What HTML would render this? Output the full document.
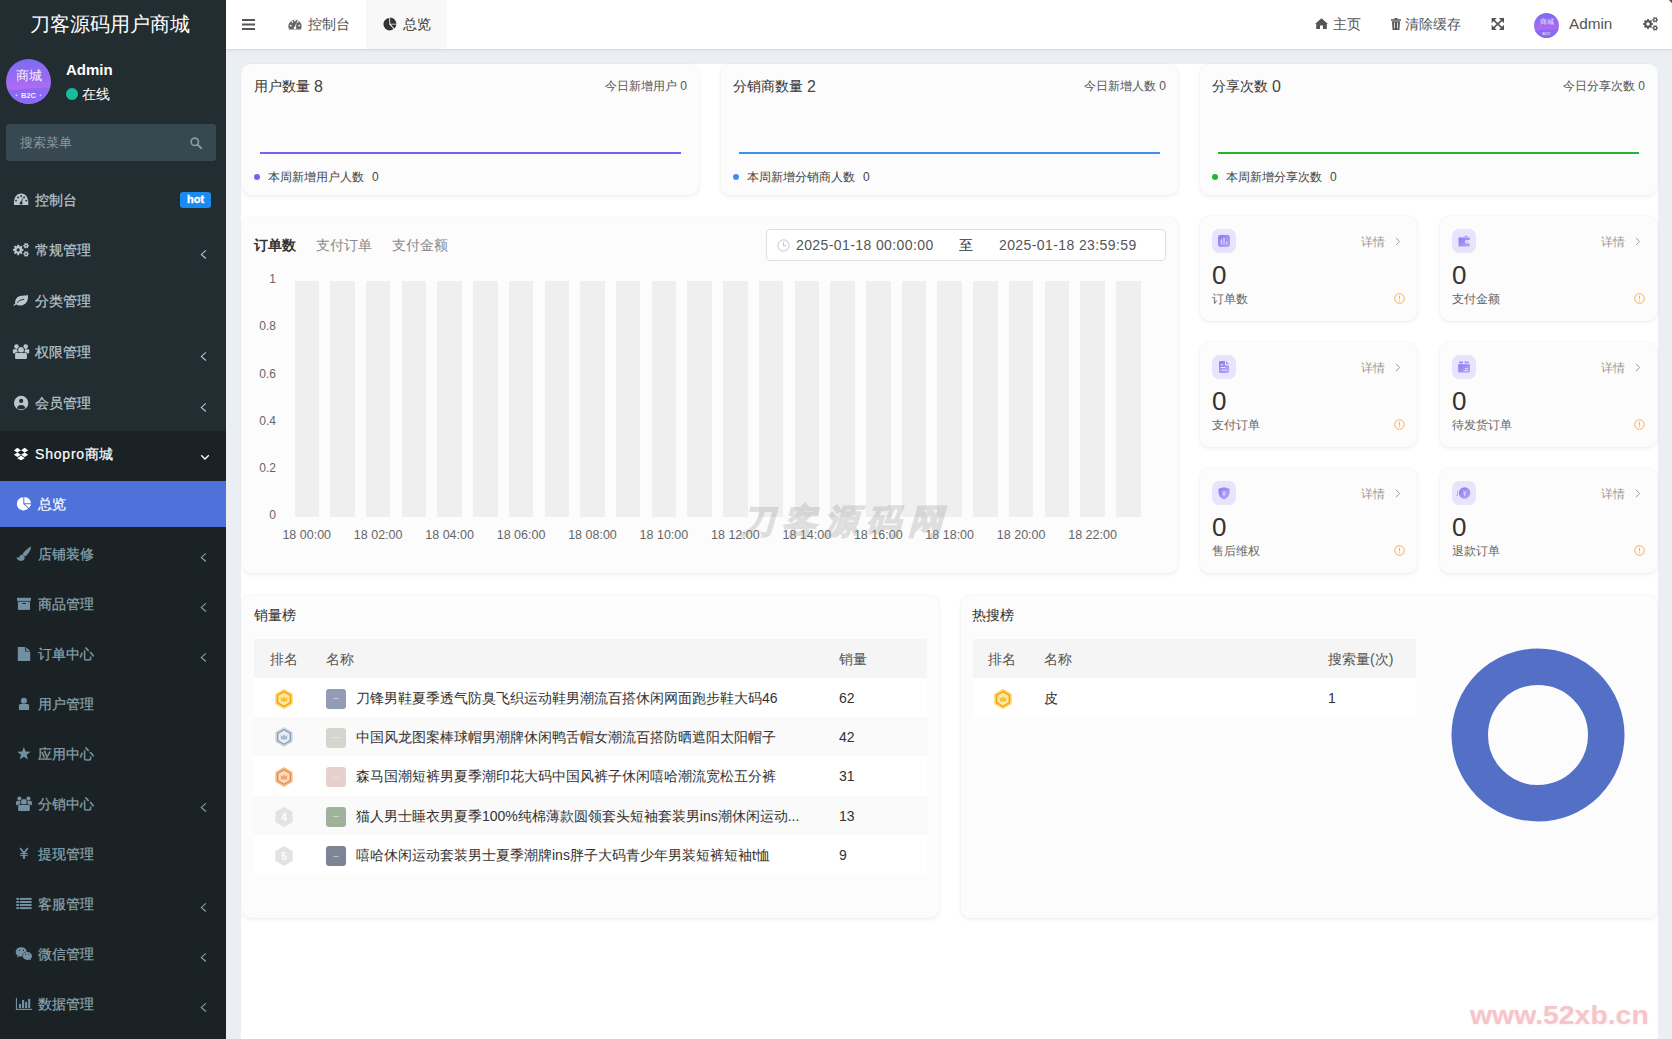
<!DOCTYPE html>
<html><head><meta charset="utf-8">
<style>
*{box-sizing:border-box;margin:0;padding:0}
html,body{width:1672px;height:1039px;overflow:hidden}
body{position:relative;background:#ebeef3;font-family:"Liberation Sans",sans-serif;color:#333;font-size:14px}
.abs{position:absolute}
svg{display:block}
/* sidebar */
#side{position:absolute;left:0;top:0;width:226px;height:1039px;background:#222d32;overflow:hidden}
#side .logo{position:absolute;left:-3px;top:0;width:226px;height:49px;text-align:center;color:#fff;font-size:20px;line-height:49px}
#side .av{position:absolute;left:6px;top:59px;width:45px;height:45px;border-radius:50%;background:linear-gradient(180deg,#8a63f0 0%,#a070f2 60%,#9a6cf4 100%);overflow:hidden}
#side .uname{position:absolute;left:66px;top:61px;font-weight:bold;font-size:15px;color:#fff;line-height:18px}
#side .online{position:absolute;left:66px;top:85px;font-size:14px;color:#fff;line-height:18px;padding-left:16px}
#side .online:before{content:"";position:absolute;left:0;top:3px;width:12px;height:12px;border-radius:50%;background:#18bc9c}
#side .search{position:absolute;left:6px;top:124px;width:210px;height:37px;border-radius:3px;background:#374850}
#side .search span{position:absolute;left:14px;top:0;line-height:37px;font-size:13px;color:#8a9aa3}
.mi{position:absolute;left:0;width:226px;height:50px;color:#b8c7ce;font-size:14px}
.mi .ic{position:absolute;left:14px;top:18px;width:14px;height:14px}
.mi .tx{position:absolute;left:35px;top:0;line-height:50px}
.mi .ch{position:absolute;left:200px;top:23px;width:7px;height:10px}
.sub{color:#8aa4af}
.sub .ic{left:17px}
.sub .tx{left:38px}
.hot{position:absolute;left:180px;top:192px;width:31px;height:16px;border-radius:3px;background:#1a8af2;color:#fff;font-size:11px;font-weight:bold;line-height:14.5px;text-align:center;-webkit-text-stroke:0.35px #fff}
#sidebot{position:absolute;left:0;top:431px;width:226px;height:608px;background:#1a2226}
/* header */
#hdr{position:absolute;left:226px;top:0;width:1446px;height:50px;background:#fff;border-bottom:1px solid #d9dde2;box-shadow:0 1px 3px rgba(0,0,0,.05)}
#panel{position:absolute;left:241px;top:64px;width:1417px;height:975px;background:#fff;border-radius:9px 9px 0 0}
.card{position:absolute;background:#fcfcfc;border-radius:9px;box-shadow:0 0 2px rgba(0,0,0,.07),0 2px 5px rgba(0,0,0,.05)}
.tt{font-size:14px;color:#333;line-height:20px}
.rt{font-size:12px;color:#555;line-height:18px}
.lg{font-size:12px;color:#444;line-height:18px}
.dt{line-height:30px;font-size:14px;color:#555;letter-spacing:0.4px}
.yl{font-size:12px;color:#666;line-height:16px;text-align:right}
.xl{font-size:12.5px;color:#666;line-height:16px;text-align:center}
.th{font-size:14px;color:#555;line-height:38px}
.td{font-size:14px;color:#333;line-height:20px;white-space:nowrap}
.tx1{position:absolute;left:35px;font-size:14px;line-height:20px;color:#b8c7ce;white-space:nowrap;-webkit-text-stroke:0.2px currentColor}
.tx2{position:absolute;left:38px;font-size:14px;line-height:20px;color:#8aa4af;white-space:nowrap;-webkit-text-stroke:0.2px currentColor}
</style></head>
<body>
<div id="side">
  <div class="logo">刀客源码用户商城</div>
  <svg class="abs" style="left:6px;top:59px" width="45" height="45" viewBox="0 0 45 45"><defs><linearGradient id="ag" x1="0" y1="0" x2="0" y2="1"><stop offset="0" stop-color="#7c6bf3"/><stop offset="0.45" stop-color="#9a6cf2"/><stop offset="0.66" stop-color="#b46bef"/><stop offset="1" stop-color="#b46bef"/></linearGradient><clipPath id="ac"><circle cx="22.5" cy="22.5" r="22.5"/></clipPath></defs><g clip-path="url(#ac)"><rect width="45" height="45" fill="url(#ag)"/><path d="M0 30 C12 32 28 28 45 29 V45 H0 Z" fill="#8a6af3"/></g><text x="22.5" y="20.5" text-anchor="middle" font-size="13" fill="#fff" fill-opacity="0.92">商城</text><text x="22.5" y="39" text-anchor="middle" font-family="Liberation Sans" font-size="7.5" font-weight="bold" fill="#fff" fill-opacity="0.9">B2C</text><circle cx="10.5" cy="36.3" r="0.9" fill="#fff" fill-opacity="0.7"/><circle cx="34.5" cy="36.3" r="0.9" fill="#fff" fill-opacity="0.7"/></svg>
  <div class="uname">Admin</div>
  <div class="online">在线</div>
  <div class="search"><span>搜索菜单</span><svg class="abs" style="left:184px;top:13px" width="12" height="12" viewBox="0 0 12 12"><circle cx="4.8" cy="4.8" r="3.7" fill="none" stroke="#8a9aa3" stroke-width="1.7"/><path d="M7.6 7.6 L11 11" stroke="#8a9aa3" stroke-width="2" stroke-linecap="round"/></svg></div>
  <div id="sidebot"></div>
<!--MENU-->
<div class="tx1" style="top:189.6px">控制台</div>
<span class="hot">hot</span>
<div class="tx1" style="top:240.4px">常规管理</div>
<svg class="abs" style="left:199px;top:249.0px" width="8" height="11" viewBox="0 0 8 11"><path d="M6.9 1.3 L2.3 5.4 L6.9 9.5" stroke="#b8c7ce" stroke-width="1.1" fill="none"/></svg>
<div class="tx1" style="top:291.2px">分类管理</div>
<div class="tx1" style="top:342.0px">权限管理</div>
<svg class="abs" style="left:199px;top:351.0px" width="8" height="11" viewBox="0 0 8 11"><path d="M6.9 1.3 L2.3 5.4 L6.9 9.5" stroke="#b8c7ce" stroke-width="1.1" fill="none"/></svg>
<div class="tx1" style="top:392.8px">会员管理</div>
<svg class="abs" style="left:199px;top:402.0px" width="8" height="11" viewBox="0 0 8 11"><path d="M6.9 1.3 L2.3 5.4 L6.9 9.5" stroke="#b8c7ce" stroke-width="1.1" fill="none"/></svg>
<div class="tx1" style="top:444px;color:#fff"><span style="letter-spacing:0.8px">Shopro</span>商城</div>
<svg class="abs" style="left:200px;top:454px" width="10" height="7" viewBox="0 0 10 7"><path d="M1.2 1.3 L5 5.1 L8.8 1.3" stroke="#fff" stroke-width="1.35" fill="none"/></svg>
<div class="abs" style="left:0;top:481px;width:226px;height:46px;background:#4e71da"></div>
<div class="tx2" style="top:494px;color:#fff">总览</div>
<div class="tx2" style="top:544px">店铺装修</div>
<svg class="abs" style="left:199px;top:552.0px" width="8" height="11" viewBox="0 0 8 11"><path d="M6.9 1.3 L2.3 5.4 L6.9 9.5" stroke="#8aa4af" stroke-width="1.1" fill="none"/></svg>
<div class="tx2" style="top:594px">商品管理</div>
<svg class="abs" style="left:199px;top:602.0px" width="8" height="11" viewBox="0 0 8 11"><path d="M6.9 1.3 L2.3 5.4 L6.9 9.5" stroke="#8aa4af" stroke-width="1.1" fill="none"/></svg>
<div class="tx2" style="top:644px">订单中心</div>
<svg class="abs" style="left:199px;top:652.0px" width="8" height="11" viewBox="0 0 8 11"><path d="M6.9 1.3 L2.3 5.4 L6.9 9.5" stroke="#8aa4af" stroke-width="1.1" fill="none"/></svg>
<div class="tx2" style="top:694px">用户管理</div>
<div class="tx2" style="top:744px">应用中心</div>
<div class="tx2" style="top:794px">分销中心</div>
<svg class="abs" style="left:199px;top:802.0px" width="8" height="11" viewBox="0 0 8 11"><path d="M6.9 1.3 L2.3 5.4 L6.9 9.5" stroke="#8aa4af" stroke-width="1.1" fill="none"/></svg>
<div class="tx2" style="top:844px">提现管理</div>
<div class="tx2" style="top:894px">客服管理</div>
<svg class="abs" style="left:199px;top:902.0px" width="8" height="11" viewBox="0 0 8 11"><path d="M6.9 1.3 L2.3 5.4 L6.9 9.5" stroke="#8aa4af" stroke-width="1.1" fill="none"/></svg>
<div class="tx2" style="top:944px">微信管理</div>
<svg class="abs" style="left:199px;top:952.0px" width="8" height="11" viewBox="0 0 8 11"><path d="M6.9 1.3 L2.3 5.4 L6.9 9.5" stroke="#8aa4af" stroke-width="1.1" fill="none"/></svg>
<div class="tx2" style="top:994px">数据管理</div>
<svg class="abs" style="left:199px;top:1002.0px" width="8" height="11" viewBox="0 0 8 11"><path d="M6.9 1.3 L2.3 5.4 L6.9 9.5" stroke="#8aa4af" stroke-width="1.1" fill="none"/></svg>
<svg class="abs" style="left:12px;top:192px;color:#b8c7ce" width="18" height="15" viewBox="12 192 18 15"><path d="M14 205 C13.3 198 16.5 193.6 21.1 193.6 C25.7 193.6 28.9 198 28.2 205 Z" fill="currentColor"/><circle cx="16" cy="200.6" r="0.95" fill="#222d32"/><circle cx="18.1" cy="197.4" r="0.95" fill="#222d32"/><circle cx="21.1" cy="195.9" r="0.95" fill="#222d32"/><circle cx="24.1" cy="197.4" r="0.95" fill="#222d32"/><circle cx="26.2" cy="200.6" r="0.95" fill="#222d32"/><path d="M20.3 203.2 L22.9 196.8 L21.9 203.6 Z" fill="#222d32"/><circle cx="21.1" cy="203.2" r="1.35" fill="#222d32"/></svg>
<svg class="abs" style="left:11px;top:241px;color:#b8c7ce" width="19" height="18" viewBox="11 241 19 18"><path fill-rule="evenodd" d="M22.07 248.87 L23.43 249.03 L23.43 250.77 L22.07 250.93 L21.66 251.91 L22.51 252.98 L21.28 254.21 L20.21 253.36 L19.23 253.77 L19.07 255.13 L17.33 255.13 L17.17 253.77 L16.19 253.36 L15.12 254.21 L13.89 252.98 L14.74 251.91 L14.33 250.93 L12.97 250.77 L12.97 249.03 L14.33 248.87 L14.74 247.89 L13.89 246.82 L15.12 245.59 L16.19 246.44 L17.17 246.03 L17.33 244.67 L19.07 244.67 L19.23 246.03 L20.21 246.44 L21.28 245.59 L22.51 246.82 L21.66 247.89 Z M19.80 249.90 A1.6 1.6 0 1 0 16.60 249.90 A1.6 1.6 0 1 0 19.80 249.90 Z" fill="currentColor"/><path fill-rule="evenodd" d="M28.08 244.99 L28.93 245.07 L28.93 246.33 L28.08 246.41 L27.70 247.06 L28.06 247.83 L26.97 248.47 L26.47 247.77 L25.73 247.77 L25.23 248.47 L24.14 247.83 L24.50 247.06 L24.12 246.41 L23.27 246.33 L23.27 245.07 L24.12 244.99 L24.50 244.34 L24.14 243.57 L25.23 242.93 L25.73 243.63 L26.47 243.63 L26.97 242.93 L28.06 243.57 L27.70 244.34 Z M26.90 245.70 A0.8 0.8 0 1 0 25.30 245.70 A0.8 0.8 0 1 0 26.90 245.70 Z" fill="currentColor"/><path fill-rule="evenodd" d="M28.08 253.19 L28.93 253.27 L28.93 254.53 L28.08 254.61 L27.70 255.26 L28.06 256.03 L26.97 256.67 L26.47 255.97 L25.73 255.97 L25.23 256.67 L24.14 256.03 L24.50 255.26 L24.12 254.61 L23.27 254.53 L23.27 253.27 L24.12 253.19 L24.50 252.54 L24.14 251.77 L25.23 251.13 L25.73 251.83 L26.47 251.83 L26.97 251.13 L28.06 251.77 L27.70 252.54 Z M26.90 253.90 A0.8 0.8 0 1 0 25.30 253.90 A0.8 0.8 0 1 0 26.90 253.90 Z" fill="currentColor"/></svg>
<svg class="abs" style="left:12px;top:293px;color:#b8c7ce" width="18" height="14" viewBox="12 293 18 14"><path d="M13.3 305.6 C13.6 305 14.3 304.2 15.2 303.6 C14.8 300 16.5 297 20 296 C23 295.2 26 296 27.8 294.7 C28.6 299 27 303.5 23 305 C20.5 306 18 305.6 16.2 304.6 C15.4 305.1 14.4 305.9 13.3 305.6 Z" fill="currentColor"/><path d="M17.2 302.6 C19 300.6 21 299.6 23.8 299.3" stroke="#222d32" stroke-width="0.95" fill="none" stroke-linecap="round"/></svg>
<svg class="abs" style="left:12px;top:343px;color:#b8c7ce" width="18" height="17" viewBox="12 343 18 17"><circle cx="16.5" cy="346.6" r="2.3" fill="currentColor"/><circle cx="25.7" cy="346.6" r="2.3" fill="currentColor"/><rect x="12.9" y="349.3" width="4.6" height="4.2" rx="1" fill="currentColor"/><rect x="24.6" y="349.3" width="4.6" height="4.2" rx="1" fill="currentColor"/><circle cx="21" cy="349.9" r="3.4" fill="#222d32"/><circle cx="21" cy="349.9" r="2.9" fill="currentColor"/><rect x="14.6" y="352.6" width="12.8" height="6.8" rx="1.4" fill="#222d32"/><rect x="15.1" y="353.1" width="11.8" height="5.9" rx="1.1" fill="currentColor"/></svg>
<svg class="abs" style="left:13px;top:395px;color:#b8c7ce" width="17" height="17" viewBox="13 395 17 17"><circle cx="21.15" cy="403" r="7.2" fill="currentColor"/><circle cx="21.15" cy="400.9" r="2.1" fill="#222d32"/><path d="M17.1 407.9 C17.6 405.5 19.2 404.9 21.15 404.9 C23.1 404.9 24.7 405.5 25.2 407.9 C24 408.9 22.6 409.2 21.15 409.2 C19.7 409.2 18.3 408.9 17.1 407.9 Z" fill="#222d32"/></svg>
<svg class="abs" style="left:13px;top:446px;color:#fff" width="17" height="16" viewBox="13 446 17 16"><path d="M17.3 447.8 L13.9 450.4 L17.4 452.6 L20.9 450.3 Z M24.7 447.8 L28.2 450.4 L24.6 452.6 L21.1 450.3 Z M13.9 454.7 L17.4 452.6 L20.9 454.8 L17.4 457.1 Z M28.2 454.7 L24.6 452.6 L21.1 454.8 L24.6 457.1 Z M17.5 457.9 L21 455.6 L24.5 457.9 L24.5 458.4 L21 460.3 L17.5 458.4 Z" fill="#fff"/></svg>
<svg class="abs" style="left:15px;top:495px;color:#fff" width="18" height="17" viewBox="15 495 18 17"><path d="M23.3 497.2 L23.3 503.9 L28.2 508.4 A6.6 6.6 0 1 1 23.3 497.2 Z" fill="#fff"/><path d="M24.3 496.9 A6.6 6.6 0 0 1 31 503.2 L24.3 503.2 Z" fill="#fff"/><path d="M24.8 504.2 L31 504.2 A6.6 6.6 0 0 1 28.9 508.1 Z" fill="#fff"/></svg>
<svg class="abs" style="left:15px;top:545px;color:#7390a0" width="18" height="18" viewBox="15 545 18 18"><path d="M30.9 546.9 C31.4 547.8 30 551.5 26.5 555.5 C25.6 556.4 24.4 556.3 23.5 555.5 C22.7 554.6 22.7 553.5 23.6 552.6 C27.2 549 30 546.4 30.9 546.9 Z" fill="currentColor"/><path d="M22.4 554.6 C24 555.4 25 556.8 24.6 558.6 C24 560.6 21.8 561.2 19.8 560.8 C18 560.4 16.9 559.2 16.5 557 C17.6 557.8 18.6 557.8 19.3 557 C20 556 20.6 554.5 22.4 554.6 Z" fill="currentColor"/></svg>
<svg class="abs" style="left:15px;top:596px;color:#7390a0" width="18" height="16" viewBox="15 596 18 16"><rect x="17" y="597.8" width="13.9" height="3.1" fill="currentColor"/><rect x="17.9" y="601.6" width="12.1" height="8.3" fill="currentColor"/><rect x="22.3" y="603" width="3.5" height="1.1" rx="0.55" fill="#1a2226"/></svg>
<svg class="abs" style="left:16px;top:645px;color:#7390a0" width="16" height="17" viewBox="16 645 16 17"><path d="M17.8 646.9 H25.2 V651.6 H30.2 V660.9 H17.8 Z" fill="currentColor"/><path d="M26.2 647.2 L30 651 H26.2 Z" fill="currentColor"/></svg>
<svg class="abs" style="left:17px;top:696px;color:#7390a0" width="14" height="15" viewBox="17 696 14 15"><circle cx="23.9" cy="700.7" r="3.05" fill="currentColor"/><path d="M18.9 709.9 V705.6 C18.9 704.6 19.7 703.9 20.7 703.9 H27.3 C28.3 703.9 29.1 704.6 29.1 705.6 V709.9 Z" fill="currentColor"/></svg>
<svg class="abs" style="left:15px;top:745px;color:#7390a0" width="18" height="17" viewBox="15 745 18 17"><polygon points="23.85,746.90 25.55,751.55 30.51,751.74 26.61,754.80 27.96,759.56 23.85,756.80 19.74,759.56 21.09,754.80 17.19,751.74 22.15,751.55" fill="currentColor"/></svg>
<svg class="abs" style="left:15px;top:795px;color:#7390a0" width="18" height="17" viewBox="15 795 18 17"><circle cx="19.4" cy="798.6" r="2.1" fill="currentColor"/><circle cx="28.4" cy="798.6" r="2.1" fill="currentColor"/><rect x="16" y="801" width="4.5" height="4.2" rx="1" fill="currentColor"/><rect x="27.4" y="801" width="4.5" height="4.2" rx="1" fill="currentColor"/><circle cx="23.9" cy="801.9" r="3.4" fill="#1a2226"/><circle cx="23.9" cy="801.9" r="2.9" fill="currentColor"/><rect x="17.6" y="804.5" width="12.7" height="6.9" rx="1.4" fill="#1a2226"/><rect x="18.1" y="805" width="11.7" height="6" rx="1.1" fill="currentColor"/></svg>
<svg class="abs" style="left:18px;top:846px;color:#7390a0" width="12" height="14" viewBox="18 846 12 14"><path d="M20.2 847.9 L24 853 L27.8 847.9" stroke="currentColor" stroke-width="1.7" fill="none"/><path d="M24 852.5 V859" stroke="currentColor" stroke-width="1.8"/><path d="M20.2 853.6 H27.8 M20.2 855.6 H27.8" stroke="currentColor" stroke-width="1"/></svg>
<svg class="abs" style="left:15px;top:896px;color:#7390a0" width="18" height="14" viewBox="15 896 18 14"><rect x="16.3" y="897.9" width="2.6" height="2" fill="currentColor"/><rect x="19.7" y="897.9" width="11.9" height="2" fill="currentColor"/><rect x="16.3" y="901" width="2.6" height="2" fill="currentColor"/><rect x="19.7" y="901" width="11.9" height="2" fill="currentColor"/><rect x="16.3" y="904" width="2.6" height="2" fill="currentColor"/><rect x="19.7" y="904" width="11.9" height="2" fill="currentColor"/><rect x="16.3" y="907.1" width="2.6" height="2" fill="currentColor"/><rect x="19.7" y="907.1" width="11.9" height="2" fill="currentColor"/></svg>
<svg class="abs" style="left:15px;top:946px;color:#7390a0" width="18" height="16" viewBox="15 946 18 16"><path d="M21.2 947.3 C24.4 947.3 26.8 949.3 26.8 951.9 C26.8 954.5 24.4 956.5 21.2 956.5 C20.5 956.5 19.9 956.4 19.3 956.2 L17 957.6 L17.6 955.4 C16.4 954.5 15.7 953.3 15.7 951.9 C15.7 949.3 18 947.3 21.2 947.3 Z" fill="currentColor"/><path d="M27.4 952 C30 952 32 953.8 32 956 C32 957.1 31.5 958.1 30.7 958.8 L31.1 960.6 L29.2 959.6 C28.6 959.8 28 959.9 27.4 959.9 C24.8 959.9 22.7 958.2 22.7 956 C22.7 953.8 24.8 952 27.4 952 Z" fill="#1a2226" stroke="#1a2226" stroke-width="0.8"/><path d="M27.4 952 C30 952 32 953.8 32 956 C32 957.1 31.5 958.1 30.7 958.8 L31.1 960.6 L29.2 959.6 C28.6 959.8 28 959.9 27.4 959.9 C24.8 959.9 22.7 958.2 22.7 956 C22.7 953.8 24.8 952 27.4 952 Z" fill="currentColor"/><circle cx="19.5" cy="950.4" r="0.6" fill="#1a2226"/><circle cx="23.5" cy="950.4" r="0.6" fill="#1a2226"/><circle cx="25.6" cy="954.5" r="0.55" fill="#1a2226"/><circle cx="28.7" cy="954.5" r="0.55" fill="#1a2226"/></svg>
<svg class="abs" style="left:15px;top:996px;color:#7390a0" width="18" height="15" viewBox="15 996 18 15"><rect x="15.9" y="997.9" width="1.1" height="12" fill="currentColor"/><rect x="15.9" y="1008.9" width="16.2" height="1.1" fill="currentColor"/><rect x="18.9" y="1003.9" width="2.1000000000000014" height="4.300000000000068" fill="currentColor"/><rect x="22" y="1000" width="2.1000000000000014" height="8.200000000000045" fill="currentColor"/><rect x="25.1" y="1001.9" width="2.0" height="6.300000000000068" fill="currentColor"/><rect x="28.1" y="998.9" width="2.099999999999998" height="9.300000000000068" fill="currentColor"/></svg>
<!--/MENU-->
</div>
<div id="hdr">
  <svg class="abs" style="left:16px;top:19px" width="13" height="11" viewBox="0 0 13 11"><rect y="0" width="13" height="2" fill="#555"/><rect y="4.5" width="13" height="2" fill="#555"/><rect y="9" width="13" height="2" fill="#555"/></svg>
  <svg class="abs" style="left:62px;top:17px" width="14" height="13" viewBox="0 0 14 13"><path d="M1.2 12.6 A6.6 6.6 0 1 1 12.8 12.6 Z" fill="#666"/><circle cx="2.8" cy="8.6" r="0.9" fill="#fff"/><circle cx="4.3" cy="4.8" r="0.9" fill="#fff"/><circle cx="7" cy="3.4" r="0.9" fill="#fff"/><circle cx="11.2" cy="8.6" r="0.9" fill="#fff"/><circle cx="9.7" cy="4.8" r="0.9" fill="#fff"/><path d="M6.3 11.2 L8.6 5 L7.8 11.6 Z" fill="#fff"/><circle cx="7" cy="11" r="1.3" fill="#fff"/></svg>
  <span class="abs" style="left:82px;top:0;line-height:49px;font-size:14px;color:#555">控制台</span>
  <div class="abs" style="left:140px;top:0;width:81px;height:49px;background:#f8f8f9"></div>
  <svg class="abs" style="left:157px;top:17px" width="14" height="14" viewBox="0 0 14 14"><path d="M6.3 1 L6.3 7.6 L10.6 12 A6.2 6.2 0 1 1 6.3 1 Z" fill="#333"/><path d="M7.2 0.6 A6.4 6.4 0 0 1 13.4 6.8 L7.2 6.8 Z" fill="#333"/><path d="M7.8 7.6 L13.4 7.6 A6.3 6.3 0 0 1 11.4 11.4 Z" fill="#333"/></svg>
  <span class="abs" style="left:177px;top:0;line-height:49px;font-size:14px;color:#333">总览</span>
  <svg class="abs" style="left:1089px;top:18px" width="13" height="11" viewBox="0 0 13 11"><path d="M6.5 0.3 L0 6 L1.2 6 L1.2 11 L5 11 L5 7.5 L8 7.5 L8 11 L11.8 11 L11.8 6 L13 6 Z" fill="#555"/></svg>
  <span class="abs" style="left:1107px;top:0;line-height:49px;font-size:14px;color:#555">主页</span>
  <svg class="abs" style="left:1165px;top:18px" width="10" height="12" viewBox="0 0 10 12"><rect x="0" y="1.2" width="10" height="1.5" fill="#555"/><rect x="3.5" y="0" width="3" height="1.5" fill="#555"/><path d="M1 3.2 H9 L8.4 12 H1.6 Z" fill="#555"/><rect x="3.2" y="4.5" width="0.8" height="6" fill="#fff"/><rect x="6" y="4.5" width="0.8" height="6" fill="#fff"/></svg>
  <span class="abs" style="left:1179px;top:0;line-height:49px;font-size:14px;color:#555">清除缓存</span>
  
  <svg class="abs" style="left:1308px;top:13px" width="25" height="25" viewBox="0 0 45 45"><g clip-path="url(#ac)"><rect width="45" height="45" fill="url(#ag)"/><path d="M0 30 C12 32 28 28 45 29 V45 H0 Z" fill="#8a6af3"/></g><text x="22.5" y="20.5" text-anchor="middle" font-size="13" fill="#fff" fill-opacity="0.85">商城</text><text x="22.5" y="39" text-anchor="middle" font-family="Liberation Sans" font-size="7.5" font-weight="bold" fill="#fff" fill-opacity="0.7">B2C</text></svg>
  <span class="abs" style="left:1343px;top:-1px;line-height:49px;font-size:15.3px;color:#555">Admin</span>
  
</div>
<div id="panel"></div>
<svg class="abs" style="left:1490px;top:17px" width="16" height="14" viewBox="1490 17 16 14"><path d="M1491.6 18.1 H1496.8 L1491.6 23.3 Z M1504 18.1 V23.3 L1498.8 18.1 Z M1491.6 29.9 V24.7 L1496.8 29.9 Z M1504 29.9 H1498.8 L1504 24.7 Z" fill="#555"/><path d="M1493.2 19.7 L1502.4 28.3 M1502.4 19.7 L1493.2 28.3" stroke="#555" stroke-width="1.6"/></svg>
<svg class="abs" style="left:1641px;top:15px" width="19" height="17" viewBox="1641 15 19 17"><path fill-rule="evenodd" d="M1651.67 23.03 L1652.93 23.18 L1652.93 24.82 L1651.67 24.97 L1651.29 25.91 L1652.07 26.91 L1650.91 28.07 L1649.91 27.29 L1648.97 27.67 L1648.82 28.93 L1647.18 28.93 L1647.03 27.67 L1646.09 27.29 L1645.09 28.07 L1643.93 26.91 L1644.71 25.91 L1644.33 24.97 L1643.07 24.82 L1643.07 23.18 L1644.33 23.03 L1644.71 22.09 L1643.93 21.09 L1645.09 19.93 L1646.09 20.71 L1647.03 20.33 L1647.18 19.07 L1648.82 19.07 L1648.97 20.33 L1649.91 20.71 L1650.91 19.93 L1652.07 21.09 L1651.29 22.09 Z M1649.75 24.00 A1.75 1.75 0 1 0 1646.25 24.00 A1.75 1.75 0 1 0 1649.75 24.00 Z" fill="#555"/><path fill-rule="evenodd" d="M1657.08 19.09 L1657.93 19.17 L1657.93 20.43 L1657.08 20.51 L1656.70 21.16 L1657.06 21.93 L1655.97 22.57 L1655.47 21.87 L1654.73 21.87 L1654.23 22.57 L1653.14 21.93 L1653.50 21.16 L1653.12 20.51 L1652.27 20.43 L1652.27 19.17 L1653.12 19.09 L1653.50 18.44 L1653.14 17.67 L1654.23 17.03 L1654.73 17.73 L1655.47 17.73 L1655.97 17.03 L1657.06 17.67 L1656.70 18.44 Z M1656.05 19.80 A0.95 0.95 0 1 0 1654.15 19.80 A0.95 0.95 0 1 0 1656.05 19.80 Z" fill="#555"/><path fill-rule="evenodd" d="M1657.08 27.19 L1657.93 27.27 L1657.93 28.53 L1657.08 28.61 L1656.70 29.26 L1657.06 30.03 L1655.97 30.67 L1655.47 29.97 L1654.73 29.97 L1654.23 30.67 L1653.14 30.03 L1653.50 29.26 L1653.12 28.61 L1652.27 28.53 L1652.27 27.27 L1653.12 27.19 L1653.50 26.54 L1653.14 25.77 L1654.23 25.13 L1654.73 25.83 L1655.47 25.83 L1655.97 25.13 L1657.06 25.77 L1656.70 26.54 Z M1656.05 27.90 A0.95 0.95 0 1 0 1654.15 27.90 A0.95 0.95 0 1 0 1656.05 27.90 Z" fill="#555"/></svg>
<div class="card" style="left:242px;top:64px;width:457px;height:131px">
  <div class="abs tt" style="left:12px;top:12px">用户数量 <span style="font-size:16px;color:#444;position:relative;top:1px">8</span></div>
  <div class="abs rt" style="right:12px;top:13px">今日新增用户 0</div>
  <div class="abs" style="left:18px;top:88px;width:421px;height:2px;background:#7b5cf5"></div>
  <div class="abs" style="left:12px;top:110px;width:6px;height:6px;border-radius:50%;background:#7b5cf5"></div>
  <div class="abs lg" style="left:26px;top:104px">本周新增用户人数<span style="margin-left:8px">0</span></div>
</div>
<div class="card" style="left:721px;top:64px;width:457px;height:131px">
  <div class="abs tt" style="left:12px;top:12px">分销商数量 <span style="font-size:16px;color:#444;position:relative;top:1px">2</span></div>
  <div class="abs rt" style="right:12px;top:13px">今日新增人数 0</div>
  <div class="abs" style="left:18px;top:88px;width:421px;height:2px;background:#3d8ef5"></div>
  <div class="abs" style="left:12px;top:110px;width:6px;height:6px;border-radius:50%;background:#3d8ef5"></div>
  <div class="abs lg" style="left:26px;top:104px">本周新增分销商人数<span style="margin-left:8px">0</span></div>
</div>
<div class="card" style="left:1200px;top:64px;width:457px;height:131px">
  <div class="abs tt" style="left:12px;top:12px">分享次数 <span style="font-size:16px;color:#444;position:relative;top:1px">0</span></div>
  <div class="abs rt" style="right:12px;top:13px">今日分享次数 0</div>
  <div class="abs" style="left:18px;top:88px;width:421px;height:2px;background:#1fb82f"></div>
  <div class="abs" style="left:12px;top:110px;width:6px;height:6px;border-radius:50%;background:#1fb82f"></div>
  <div class="abs lg" style="left:26px;top:104px">本周新增分享次数<span style="margin-left:8px">0</span></div>
</div>
<div class="card" style="left:242px;top:217px;width:936px;height:356px"><div class="abs" style="left:12px;top:18px;font-size:14px;font-weight:bold;color:#333;line-height:20px">订单数</div><div class="abs" style="left:74px;top:18px;font-size:14px;color:#888;line-height:20px">支付订单</div><div class="abs" style="left:150px;top:18px;font-size:14px;color:#888;line-height:20px">支付金额</div><div class="abs" style="left:524px;top:12px;width:400px;height:32px;border:1px solid #dcdfe6;border-radius:4px;background:#fff">
<svg class="abs" style="left:10px;top:9px" width="13" height="13" viewBox="0 0 13 13"><circle cx="6.5" cy="6.5" r="5.6" fill="none" stroke="#c0c4cc" stroke-width="1"/><path d="M6.5 3 V6.8 H9.3" stroke="#c0c4cc" stroke-width="1" fill="none"/></svg>
<span class="abs dt" style="left:29px;top:0">2025-01-18 00:00:00</span>
<span class="abs" style="left:192px;top:0;line-height:30px;font-size:14px;color:#303133">至</span>
<span class="abs dt" style="left:232px;top:0">2025-01-18 23:59:59</span>
</div><div class="abs yl" style="right:902px;top:54px">1</div><div class="abs yl" style="right:902px;top:101px">0.8</div><div class="abs yl" style="right:902px;top:149px">0.6</div><div class="abs yl" style="right:902px;top:196px">0.4</div><div class="abs yl" style="right:902px;top:243px">0.2</div><div class="abs yl" style="right:902px;top:290px">0</div><div class="abs" style="left:52.50px;top:64px;width:24.5px;height:236px;background:#efefef"></div><div class="abs" style="left:88.22px;top:64px;width:24.5px;height:236px;background:#efefef"></div><div class="abs" style="left:123.94px;top:64px;width:24.5px;height:236px;background:#efefef"></div><div class="abs" style="left:159.66px;top:64px;width:24.5px;height:236px;background:#efefef"></div><div class="abs" style="left:195.38px;top:64px;width:24.5px;height:236px;background:#efefef"></div><div class="abs" style="left:231.10px;top:64px;width:24.5px;height:236px;background:#efefef"></div><div class="abs" style="left:266.82px;top:64px;width:24.5px;height:236px;background:#efefef"></div><div class="abs" style="left:302.54px;top:64px;width:24.5px;height:236px;background:#efefef"></div><div class="abs" style="left:338.26px;top:64px;width:24.5px;height:236px;background:#efefef"></div><div class="abs" style="left:373.98px;top:64px;width:24.5px;height:236px;background:#efefef"></div><div class="abs" style="left:409.70px;top:64px;width:24.5px;height:236px;background:#efefef"></div><div class="abs" style="left:445.42px;top:64px;width:24.5px;height:236px;background:#efefef"></div><div class="abs" style="left:481.14px;top:64px;width:24.5px;height:236px;background:#efefef"></div><div class="abs" style="left:516.86px;top:64px;width:24.5px;height:236px;background:#efefef"></div><div class="abs" style="left:552.58px;top:64px;width:24.5px;height:236px;background:#efefef"></div><div class="abs" style="left:588.30px;top:64px;width:24.5px;height:236px;background:#efefef"></div><div class="abs" style="left:624.02px;top:64px;width:24.5px;height:236px;background:#efefef"></div><div class="abs" style="left:659.74px;top:64px;width:24.5px;height:236px;background:#efefef"></div><div class="abs" style="left:695.46px;top:64px;width:24.5px;height:236px;background:#efefef"></div><div class="abs" style="left:731.18px;top:64px;width:24.5px;height:236px;background:#efefef"></div><div class="abs" style="left:766.90px;top:64px;width:24.5px;height:236px;background:#efefef"></div><div class="abs" style="left:802.62px;top:64px;width:24.5px;height:236px;background:#efefef"></div><div class="abs" style="left:838.34px;top:64px;width:24.5px;height:236px;background:#efefef"></div><div class="abs" style="left:874.06px;top:64px;width:24.5px;height:236px;background:#efefef"></div><div class="abs xl" style="left:24.75px;top:310px;width:80px">18 00:00</div><div class="abs xl" style="left:96.19px;top:310px;width:80px">18 02:00</div><div class="abs xl" style="left:167.63px;top:310px;width:80px">18 04:00</div><div class="abs xl" style="left:239.07px;top:310px;width:80px">18 06:00</div><div class="abs xl" style="left:310.51px;top:310px;width:80px">18 08:00</div><div class="abs xl" style="left:381.95px;top:310px;width:80px">18 10:00</div><div class="abs xl" style="left:453.39px;top:310px;width:80px">18 12:00</div><div class="abs xl" style="left:524.83px;top:310px;width:80px">18 14:00</div><div class="abs xl" style="left:596.27px;top:310px;width:80px">18 16:00</div><div class="abs xl" style="left:667.71px;top:310px;width:80px">18 18:00</div><div class="abs xl" style="left:739.15px;top:310px;width:80px">18 20:00</div><div class="abs xl" style="left:810.59px;top:310px;width:80px">18 22:00</div></div>
<div class="card" style="left:1200px;top:216px;width:217px;height:105px"><div class="abs" style="left:12px;top:13px;width:24px;height:24px;border-radius:7px;background:#e8e4fb"></div><svg class="abs" style="left:18px;top:19px;overflow:visible" width="12" height="12" viewBox="0 0 12 12"><defs><linearGradient id="ig" x1="0" y1="0" x2="1" y2="1"><stop offset="0" stop-color="#8a78f6"/><stop offset="1" stop-color="#b6a9f7"/></linearGradient></defs><rect x="0" y="0" width="12" height="12" rx="2.5" fill="url(#ig)"/><rect x="2.8" y="4.3" width="1.2" height="5" rx="0.6" fill="#e0dafc"/><rect x="5.4" y="2.7" width="1.2" height="6.6" rx="0.6" fill="#e0dafc"/><rect x="8" y="6.5" width="1.2" height="2.8" rx="0.6" fill="#e0dafc"/></svg><div class="abs" style="left:161px;top:17px;font-size:12px;color:#999;line-height:18px">详情</div><svg class="abs" style="left:195px;top:21px" width="6" height="9" viewBox="0 0 6 9"><path d="M1 0.8 L4.6 4.5 L1 8.2" stroke="#999" stroke-width="1" fill="none"/></svg><div class="abs" style="left:12px;top:46px;font-size:26px;color:#333;line-height:26px">0</div><div class="abs" style="left:12px;top:74px;font-size:12px;color:#666;line-height:18px">订单数</div><svg class="abs" style="left:194px;top:77px" width="11" height="11" viewBox="0 0 11 11"><circle cx="5.5" cy="5.5" r="4.8" fill="none" stroke="#f2b34b" stroke-width="1"/><rect x="5" y="2.6" width="1" height="3.6" fill="#f2b34b"/><rect x="5" y="7.2" width="1" height="1.1" fill="#f2b34b"/></svg></div>
<div class="card" style="left:1440px;top:216px;width:217px;height:105px"><div class="abs" style="left:12px;top:13px;width:24px;height:24px;border-radius:7px;background:#e8e4fb"></div><svg class="abs" style="left:18px;top:19px;overflow:visible" width="12" height="12" viewBox="0 0 12 12"><path d="M5.5 2 L8.5 0.6 L10 2 Z" fill="url(#ig)"/><path d="M0.5 2.5 H11.8 V5 H8.5 A1.7 1.7 0 0 0 8.5 8.4 H11.8 V11.5 H0.5 Z" fill="url(#ig)"/><circle cx="9.2" cy="6.7" r="0.6" fill="url(#ig)"/></svg><div class="abs" style="left:161px;top:17px;font-size:12px;color:#999;line-height:18px">详情</div><svg class="abs" style="left:195px;top:21px" width="6" height="9" viewBox="0 0 6 9"><path d="M1 0.8 L4.6 4.5 L1 8.2" stroke="#999" stroke-width="1" fill="none"/></svg><div class="abs" style="left:12px;top:46px;font-size:26px;color:#333;line-height:26px">0</div><div class="abs" style="left:12px;top:74px;font-size:12px;color:#666;line-height:18px">支付金额</div><svg class="abs" style="left:194px;top:77px" width="11" height="11" viewBox="0 0 11 11"><circle cx="5.5" cy="5.5" r="4.8" fill="none" stroke="#f2b34b" stroke-width="1"/><rect x="5" y="2.6" width="1" height="3.6" fill="#f2b34b"/><rect x="5" y="7.2" width="1" height="1.1" fill="#f2b34b"/></svg></div>
<div class="card" style="left:1200px;top:342px;width:217px;height:105px"><div class="abs" style="left:12px;top:13px;width:24px;height:24px;border-radius:7px;background:#e8e4fb"></div><svg class="abs" style="left:18px;top:19px;overflow:visible" width="12" height="12" viewBox="0 0 12 12"><path d="M1 1.5 Q1 0 2.5 0 H7 V3 Q7 4.5 8.5 4.5 H11 V10.5 Q11 12 9.5 12 H2.5 Q1 12 1 10.5 Z" fill="url(#ig)"/><path d="M8 0.3 L11 3.3 H8.8 Q8 3.3 8 2.5 Z" fill="url(#ig)"/><rect x="2.5" y="3" width="2.5" height="1.2" fill="#d9d2fb"/><rect x="2.5" y="6" width="5" height="1" fill="#e8e4fc"/><rect x="2.5" y="8.5" width="7" height="1.2" fill="#d9d2fb"/></svg><div class="abs" style="left:161px;top:17px;font-size:12px;color:#999;line-height:18px">详情</div><svg class="abs" style="left:195px;top:21px" width="6" height="9" viewBox="0 0 6 9"><path d="M1 0.8 L4.6 4.5 L1 8.2" stroke="#999" stroke-width="1" fill="none"/></svg><div class="abs" style="left:12px;top:46px;font-size:26px;color:#333;line-height:26px">0</div><div class="abs" style="left:12px;top:74px;font-size:12px;color:#666;line-height:18px">支付订单</div><svg class="abs" style="left:194px;top:77px" width="11" height="11" viewBox="0 0 11 11"><circle cx="5.5" cy="5.5" r="4.8" fill="none" stroke="#f2b34b" stroke-width="1"/><rect x="5" y="2.6" width="1" height="3.6" fill="#f2b34b"/><rect x="5" y="7.2" width="1" height="1.1" fill="#f2b34b"/></svg></div>
<div class="card" style="left:1440px;top:342px;width:217px;height:105px"><div class="abs" style="left:12px;top:13px;width:24px;height:24px;border-radius:7px;background:#e8e4fb"></div><svg class="abs" style="left:18px;top:19px;overflow:visible" width="12" height="12" viewBox="0 0 12 12"><path d="M1 1.5 Q1 0.5 2 0.5 H5 V2.5 H1 Z M6.5 0.5 H10 Q11 0.5 11 1.5 V2.5 H6.5 Z" fill="url(#ig)"/><rect x="0.2" y="3.2" width="11.8" height="8.3" rx="0.8" fill="url(#ig)"/><rect x="7" y="7" width="2.8" height="1" fill="#e0dafc"/><rect x="6" y="9" width="4" height="1" fill="#e0dafc"/></svg><div class="abs" style="left:161px;top:17px;font-size:12px;color:#999;line-height:18px">详情</div><svg class="abs" style="left:195px;top:21px" width="6" height="9" viewBox="0 0 6 9"><path d="M1 0.8 L4.6 4.5 L1 8.2" stroke="#999" stroke-width="1" fill="none"/></svg><div class="abs" style="left:12px;top:46px;font-size:26px;color:#333;line-height:26px">0</div><div class="abs" style="left:12px;top:74px;font-size:12px;color:#666;line-height:18px">待发货订单</div><svg class="abs" style="left:194px;top:77px" width="11" height="11" viewBox="0 0 11 11"><circle cx="5.5" cy="5.5" r="4.8" fill="none" stroke="#f2b34b" stroke-width="1"/><rect x="5" y="2.6" width="1" height="3.6" fill="#f2b34b"/><rect x="5" y="7.2" width="1" height="1.1" fill="#f2b34b"/></svg></div>
<div class="card" style="left:1200px;top:468px;width:217px;height:105px"><div class="abs" style="left:12px;top:13px;width:24px;height:24px;border-radius:7px;background:#e8e4fb"></div><svg class="abs" style="left:18px;top:19px;overflow:visible" width="12" height="12" viewBox="0 0 12 12"><path d="M6 0.3 L11.5 1.8 V6 C11.5 9 9 11.2 6 12.5 C3 11.2 0.5 9 0.5 6 V1.8 Z" fill="url(#ig)"/><path d="M4.3 4 L6 5.5 L7.7 4 M4.3 6 H7.7 M4.3 7.5 H7.7 M6 5.5 V9.3" stroke="#e0dafc" stroke-width="0.9" fill="none"/></svg><div class="abs" style="left:161px;top:17px;font-size:12px;color:#999;line-height:18px">详情</div><svg class="abs" style="left:195px;top:21px" width="6" height="9" viewBox="0 0 6 9"><path d="M1 0.8 L4.6 4.5 L1 8.2" stroke="#999" stroke-width="1" fill="none"/></svg><div class="abs" style="left:12px;top:46px;font-size:26px;color:#333;line-height:26px">0</div><div class="abs" style="left:12px;top:74px;font-size:12px;color:#666;line-height:18px">售后维权</div><svg class="abs" style="left:194px;top:77px" width="11" height="11" viewBox="0 0 11 11"><circle cx="5.5" cy="5.5" r="4.8" fill="none" stroke="#f2b34b" stroke-width="1"/><rect x="5" y="2.6" width="1" height="3.6" fill="#f2b34b"/><rect x="5" y="7.2" width="1" height="1.1" fill="#f2b34b"/></svg></div>
<div class="card" style="left:1440px;top:468px;width:217px;height:105px"><div class="abs" style="left:12px;top:13px;width:24px;height:24px;border-radius:7px;background:#e8e4fb"></div><svg class="abs" style="left:18px;top:19px;overflow:visible" width="12" height="12" viewBox="0 0 12 12"><circle cx="6.6" cy="6" r="5.8" fill="url(#ig)"/><path d="M-0.5 3.5 V9 L-2 7.5" stroke="#b6a9f7" stroke-width="0.9" fill="none"/><path d="M5 3.5 L6.6 5.2 L8.2 3.5 M5.2 6.2 H8 M6.6 5.2 V9" stroke="#e0dafc" stroke-width="1" fill="none"/></svg><div class="abs" style="left:161px;top:17px;font-size:12px;color:#999;line-height:18px">详情</div><svg class="abs" style="left:195px;top:21px" width="6" height="9" viewBox="0 0 6 9"><path d="M1 0.8 L4.6 4.5 L1 8.2" stroke="#999" stroke-width="1" fill="none"/></svg><div class="abs" style="left:12px;top:46px;font-size:26px;color:#333;line-height:26px">0</div><div class="abs" style="left:12px;top:74px;font-size:12px;color:#666;line-height:18px">退款订单</div><svg class="abs" style="left:194px;top:77px" width="11" height="11" viewBox="0 0 11 11"><circle cx="5.5" cy="5.5" r="4.8" fill="none" stroke="#f2b34b" stroke-width="1"/><rect x="5" y="2.6" width="1" height="3.6" fill="#f2b34b"/><rect x="5" y="7.2" width="1" height="1.1" fill="#f2b34b"/></svg></div>
<div class="card" style="left:242px;top:595px;width:697px;height:323px"><div class="abs" style="left:12px;top:10px;font-size:14px;color:#333;line-height:20px">销量榜</div><div class="abs" style="left:12px;top:44px;width:673px;height:39px;background:#f5f5f5"></div><div class="abs th" style="left:28px;top:45px">排名</div><div class="abs th" style="left:84px;top:45px">名称</div><div class="abs th" style="left:597px;top:45px">销量</div><div class="abs" style="left:12px;top:83px;width:673px;height:39px;background:#fff"></div><svg class="abs" style="left:33px;top:94px" width="18" height="20" viewBox="0 0 18 20"><polygon points="9.00,0.00 17.66,5.00 17.66,15.00 9.00,20.00 0.34,15.00 0.34,5.00" fill="#fcd25a"/><polygon points="9.00,2.70 15.32,6.35 15.32,13.65 9.00,17.30 2.68,13.65 2.68,6.35" fill="#fde9a6" stroke="#f5a20c" stroke-width="1.4"/><path d="M6 12.6 L5.6 8 L7.6 9.6 L9 7 L10.4 9.6 L12.4 8 L12 12.6 Z" fill="#f9c02a"/></svg><div class="abs" style="left:84px;top:93.5px;width:20px;height:20px;border-radius:3px;background:#929cb8"></div><div class="abs" style="left:91px;top:103.0px;width:6px;height:1px;background:rgba(255,255,255,.45)"></div><div class="abs td" style="left:114px;top:92.5px">刀锋男鞋夏季透气防臭飞织运动鞋男潮流百搭休闲网面跑步鞋大码46</div><div class="abs td" style="left:597px;top:92.5px">62</div><div class="abs" style="left:12px;top:122px;width:673px;height:39px;background:#fafafa"></div><svg class="abs" style="left:33px;top:132px" width="18" height="20" viewBox="0 0 18 20"><polygon points="9.00,0.00 17.66,5.00 17.66,15.00 9.00,20.00 0.34,15.00 0.34,5.00" fill="#cfd8e2"/><polygon points="9.00,2.70 15.32,6.35 15.32,13.65 9.00,17.30 2.68,13.65 2.68,6.35" fill="#e8eef5" stroke="#8c9db2" stroke-width="1.4"/><path d="M6 12.6 L5.6 8 L7.6 9.6 L9 7 L10.4 9.6 L12.4 8 L12 12.6 Z" fill="#a7b9cf"/></svg><div class="abs" style="left:84px;top:132.5px;width:20px;height:20px;border-radius:3px;background:#d5d5d0"></div><div class="abs" style="left:91px;top:142.0px;width:6px;height:1px;background:rgba(255,255,255,.45)"></div><div class="abs td" style="left:114px;top:131.5px">中国风龙图案棒球帽男潮牌休闲鸭舌帽女潮流百搭防晒遮阳太阳帽子</div><div class="abs td" style="left:597px;top:131.5px">42</div><div class="abs" style="left:12px;top:161px;width:673px;height:40px;background:#fff"></div><svg class="abs" style="left:33px;top:172px" width="18" height="20" viewBox="0 0 18 20"><polygon points="9.00,0.00 17.66,5.00 17.66,15.00 9.00,20.00 0.34,15.00 0.34,5.00" fill="#f5c08e"/><polygon points="9.00,2.70 15.32,6.35 15.32,13.65 9.00,17.30 2.68,13.65 2.68,6.35" fill="#fbdcc0" stroke="#e58a46" stroke-width="1.4"/><path d="M6 12.6 L5.6 8 L7.6 9.6 L9 7 L10.4 9.6 L12.4 8 L12 12.6 Z" fill="#eea56b"/></svg><div class="abs" style="left:84px;top:172.0px;width:20px;height:20px;border-radius:3px;background:#e6d0cc"></div><div class="abs" style="left:91px;top:181.5px;width:6px;height:1px;background:rgba(255,255,255,.45)"></div><div class="abs td" style="left:114px;top:171px">森马国潮短裤男夏季潮印花大码中国风裤子休闲嘻哈潮流宽松五分裤</div><div class="abs td" style="left:597px;top:171px">31</div><div class="abs" style="left:12px;top:201px;width:673px;height:39px;background:#fafafa"></div><svg class="abs" style="left:33px;top:212px" width="18" height="20" viewBox="0 0 18 20"><polygon points="9.00,0.00 17.66,5.00 17.66,15.00 9.00,20.00 0.34,15.00 0.34,5.00" fill="#e3e3e3"/><text x="9" y="13.8" text-anchor="middle" font-family="Liberation Sans" font-weight="bold" font-size="10" fill="#fff">4</text></svg><div class="abs" style="left:84px;top:211.5px;width:20px;height:20px;border-radius:3px;background:#9eb39a"></div><div class="abs" style="left:91px;top:221.0px;width:6px;height:1px;background:rgba(255,255,255,.45)"></div><div class="abs td" style="left:114px;top:210.5px">猫人男士睡衣男夏季100%纯棉薄款圆领套头短袖套装男ins潮休闲运动...</div><div class="abs td" style="left:597px;top:210.5px">13</div><div class="abs" style="left:12px;top:240px;width:673px;height:40px;background:#fff"></div><svg class="abs" style="left:33px;top:251px" width="18" height="20" viewBox="0 0 18 20"><polygon points="9.00,0.00 17.66,5.00 17.66,15.00 9.00,20.00 0.34,15.00 0.34,5.00" fill="#e3e3e3"/><text x="9" y="13.8" text-anchor="middle" font-family="Liberation Sans" font-weight="bold" font-size="10" fill="#fff">5</text></svg><div class="abs" style="left:84px;top:251.0px;width:20px;height:20px;border-radius:3px;background:#7d8496"></div><div class="abs" style="left:91px;top:260.5px;width:6px;height:1px;background:rgba(255,255,255,.45)"></div><div class="abs td" style="left:114px;top:250px">嘻哈休闲运动套装男士夏季潮牌ins胖子大码青少年男装短裤短袖t恤</div><div class="abs td" style="left:597px;top:250px">9</div></div>
<div class="card" style="left:961px;top:595px;width:696px;height:323px"><div class="abs" style="left:11px;top:10px;font-size:14px;color:#333;line-height:20px">热搜榜</div><div class="abs" style="left:12px;top:44px;width:443px;height:39px;background:#f5f5f5"></div><div class="abs th" style="left:27px;top:45px">排名</div><div class="abs th" style="left:83px;top:45px">名称</div><div class="abs th" style="left:367px;top:45px">搜索量(次)</div><div class="abs" style="left:12px;top:83px;width:443px;height:39px;background:#fff"></div><svg class="abs" style="left:33px;top:94px" width="18" height="20" viewBox="0 0 18 20"><polygon points="9.00,0.00 17.66,5.00 17.66,15.00 9.00,20.00 0.34,15.00 0.34,5.00" fill="#fcd25a"/><polygon points="9.00,2.70 15.32,6.35 15.32,13.65 9.00,17.30 2.68,13.65 2.68,6.35" fill="#fde9a6" stroke="#f5a20c" stroke-width="1.4"/><path d="M6 12.6 L5.6 8 L7.6 9.6 L9 7 L10.4 9.6 L12.4 8 L12 12.6 Z" fill="#f9c02a"/></svg><div class="abs td" style="left:83px;top:92.5px">皮</div><div class="abs td" style="left:367px;top:92.5px">1</div><svg class="abs" style="left:490px;top:53px" width="174" height="174" viewBox="0 0 174 174"><circle cx="87" cy="87" r="68.25" fill="none" stroke="#5470c6" stroke-width="36.5"/></svg></div>
<div class="abs" style="left:743px;top:501px;font-size:34px;color:#9a9a9a;-webkit-text-stroke:2.6px #9a9a9a;letter-spacing:8px;line-height:40px;transform:skewX(-16deg);white-space:nowrap;opacity:.3">刀客源码网</div>
<div class="abs" style="left:1470px;top:997px;font-size:25px;font-weight:bold;color:#f7c5c7;letter-spacing:0px;line-height:36px;white-space:nowrap;text-shadow:0 1px 3px rgba(0,0,0,.06);transform:scaleX(1.135);transform-origin:left">www.52xb.cn</div>
<svg class="abs" style="left:1668px;top:0" width="4" height="4" viewBox="0 0 4 4"><path d="M0.8 0 H4 V3.2 L3.2 2.4 L2.4 1.6 Z" fill="#555"/></svg>
</body></html>
